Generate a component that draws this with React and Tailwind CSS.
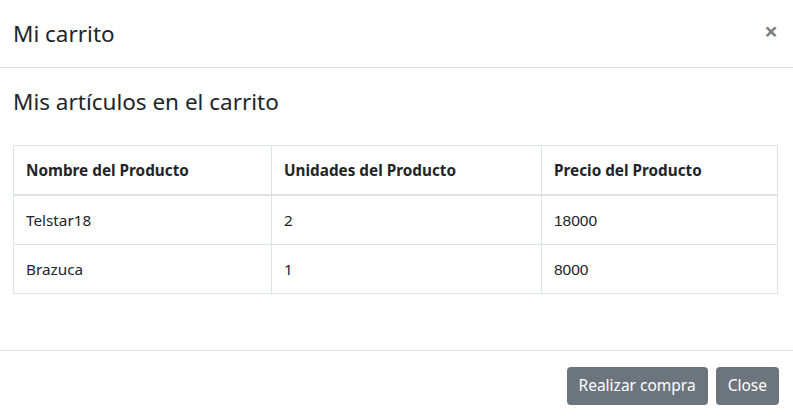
const rows = [
  { name: 'Telstar18', units: 2, price: 18000 },
  { name: 'Brazuca', units: 1, price: 8000 },
];

export default function App() {
  return (
    <div className="w-[793px] h-[419px] overflow-hidden bg-white text-[#212529] font-['Noto_Sans',sans-serif]">
      <div className="flex items-start justify-between h-[68px] border-b border-[#dee2e6] pl-[13px] pr-[15px] pt-[16px]">
        <h4 className="text-[22.5px] leading-[36px]">Mi carrito</h4>
        <span className="text-[24px] leading-[28px] font-bold text-[#808080] mt-[1px]">×</span>
      </div>

      <div className="pl-[13px] pr-[15px] pt-[16px] h-[282px]">
        <h4 className="text-[22.5px] leading-[36px]">Mis artículos en el carrito</h4>
        <table className="w-full mt-[25px] border-collapse text-[15.3px] leading-[24px]">
          <thead>
            <tr>
              <th className="w-[258px] text-left font-bold px-[12px] h-[49px] border border-[#dee2e6] border-b-2">Nombre del Producto</th>
              <th className="w-[270px] text-left font-bold px-[12px] border border-[#dee2e6] border-b-2">Unidades del Producto</th>
              <th className="text-left font-bold px-[12px] border border-[#dee2e6] border-b-2">Precio del Producto</th>
            </tr>
          </thead>
          <tbody>
            {rows.map((r) => (
              <tr key={r.name}>
                <td className="px-[12px] h-[49.5px] pt-[1px] border border-[#dee2e6]">{r.name}</td>
                <td className="px-[12px] pt-[1px] border border-[#dee2e6]">{r.units}</td>
                <td className="px-[12px] pt-[2px] border border-[#dee2e6] font-['Liberation_Sans',sans-serif] text-[15.5px]">{r.price}</td>
              </tr>
            ))}
          </tbody>
        </table>
      </div>

      <div className="flex justify-end gap-[8px] border-t border-[#dee2e6] pt-[16px] pr-[14px]">
        <button className="h-[38px] px-[12px] rounded-[4px] bg-[#6c757d] text-white text-[15.5px]">Realizar compra</button>
        <button className="h-[38px] px-[12px] rounded-[4px] bg-[#6c757d] text-white text-[15.5px]">Close</button>
      </div>
    </div>
  );
}
